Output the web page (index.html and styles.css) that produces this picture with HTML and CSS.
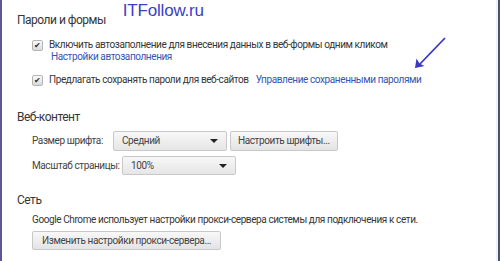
FILE: index.html
```html
<!DOCTYPE html>
<html lang="ru">
<head>
    <meta charset="UTF-8">
    <title>Настройки</title>
    <link rel="stylesheet" href="styles.css">
</head>
<body>
<div class="frame">
    <div class="page">
        <section class="group">
            <div class="groupHead">
                <h3>Пароли и формы</h3>
                <span class="watermark">ITFollow.ru</span>
            </div>
            <div class="option optionFirst">
                <span class="check">&#10004;</span>
                <div>
                    <p>Включить автозаполнение для внесения данных в веб-формы одним кликом</p>
                    <a class="link linkIndent" href="#">Настройки автозаполнения</a>
                </div>
            </div>
            <div class="option optionSecond">
                <span class="check">&#10004;</span>
                <p>Предлагать сохранять пароли для веб-сайтов</p>
                <a class="link" href="#">Управление сохраненными паролями</a>
            </div>
            <svg class="arrow" width="40" height="40" viewBox="0 0 40 40">
                <path d="M35 4 L8 32" stroke="#3b35c8" stroke-width="1.8" fill="none"/>
                <path d="M5 34 L6.5 24.5 L9.5 29.5 L14.5 32 Z" fill="#3b35c8"/>
            </svg>
        </section>

        <section class="group groupContent">
            <h3>Веб-контент</h3>
            <div class="row rowSize">
                <span class="label labelSize">Размер шрифта:</span>
                <div class="select selectSize">Средний<span class="caret"></span></div>
                <div class="button">Настроить шрифты...</div>
            </div>
            <div class="row rowZoom">
                <span class="label labelZoom">Масштаб страницы:</span>
                <div class="select selectZoom">100%<span class="caret"></span></div>
            </div>
        </section>

        <section class="group groupNet">
            <h3>Сеть</h3>
            <p class="note">Google Chrome использует настройки прокси-сервера системы для подключения к сети.</p>
            <div class="button buttonProxy">Изменить настройки прокси-сервера...</div>
        </section>
    </div>
</div>
</body>
</html>
```

FILE: styles.css
```css
body{
    margin: 0;
    background-color: #ffffff;
    font-family: Roboto, "Noto Sans", sans-serif;
    font-size: 10px;
    line-height: 12px;
    letter-spacing: -0.4px;
    color: #363636;
}
.frame{
    display: flex;
    height: 261px;
    border-left: 2px solid #5c5896;
    border-right: 2px solid #4d4f6e;
    box-sizing: border-box;
    overflow: hidden;
}
.page{
    flex: 1;
    padding-left: 15px;
    border-right: 2px solid #eef2f5;
}
h3{
    margin: 0;
    font-weight: normal;
    font-size: 12px;
    line-height: 14px;
    letter-spacing: -0.5px;
    color: #363636;
}
p{
    margin: 0;
    white-space: nowrap;
}
.group{
    position: relative;
}
.groupHead{
    display: flex;
    align-items: flex-end;
    gap: 17px;
    height: 27px;
}
.watermark{
    font-family: "Liberation Sans", sans-serif;
    font-size: 17px;
    line-height: 20px;
    letter-spacing: -0.2px;
    color: #3a3fc6;
    position: relative;
    top: -6px;
}
.option{
    display: flex;
    align-items: flex-start;
    gap: 6px;
    padding-left: 15px;
    white-space: nowrap;
}
.optionFirst{
    margin-top: 12px;
}
.optionSecond{
    margin-top: 11px;
}
.optionSecond .link{
    margin-left: 1px;
}
.check{
    box-sizing: border-box;
    width: 11px;
    height: 11px;
    margin-top: 1px;
    border: 1px solid #b4b4b4;
    border-radius: 2px;
    background: linear-gradient(#fafafa, #dadada);
    font-size: 8px;
    line-height: 9px;
    letter-spacing: 0;
    text-align: center;
    color: #2a2a2a;
    flex: none;
}
.link{
    color: #3356b2;
    text-decoration: none;
}
.linkIndent{
    display: block;
    margin-left: 2px;
}
.arrow{
    position: absolute;
    left: 393px;
    top: 34px;
}
.groupContent{
    margin-top: 24px;
}
.row{
    display: flex;
    align-items: center;
    padding-left: 15px;
}
.rowSize{
    margin-top: 7px;
}
.rowZoom{
    margin-top: 5px;
}
.label{
    flex: none;
    white-space: nowrap;
    color: #444444;
}
.labelSize{
    width: 81px;
}
.labelZoom{
    width: 90px;
}
.select{
    position: relative;
    flex: none;
    box-sizing: border-box;
    width: 114px;
    height: 20px;
    line-height: 18px;
    padding-left: 8px;
    border: 1px solid #c8c8c8;
    border-radius: 2px;
    background: linear-gradient(#f7f7f7, #e6e6e6);
    color: #444444;
}
.selectZoom{
    height: 19px;
    line-height: 17px;
}
.caret{
    position: absolute;
    right: 8px;
    top: 7px;
    border-left: 4px solid transparent;
    border-right: 4px solid transparent;
    border-top: 4px solid #222222;
}
.button{
    box-sizing: border-box;
    height: 20px;
    line-height: 18px;
    margin-left: 3px;
    padding: 0 7px;
    border: 1px solid #c8c8c8;
    border-radius: 2px;
    background: linear-gradient(#f8f8f8, #e3e3e3);
    color: #444444;
    white-space: nowrap;
}
.groupNet{
    margin-top: 18px;
}
.note{
    margin-top: 7px;
    padding-left: 15px;
}
.buttonProxy{
    display: inline-block;
    margin-top: 5px;
    margin-left: 15px;
    padding: 0 9px 0 9px;
    height: 19px;
    line-height: 17px;
}
```
